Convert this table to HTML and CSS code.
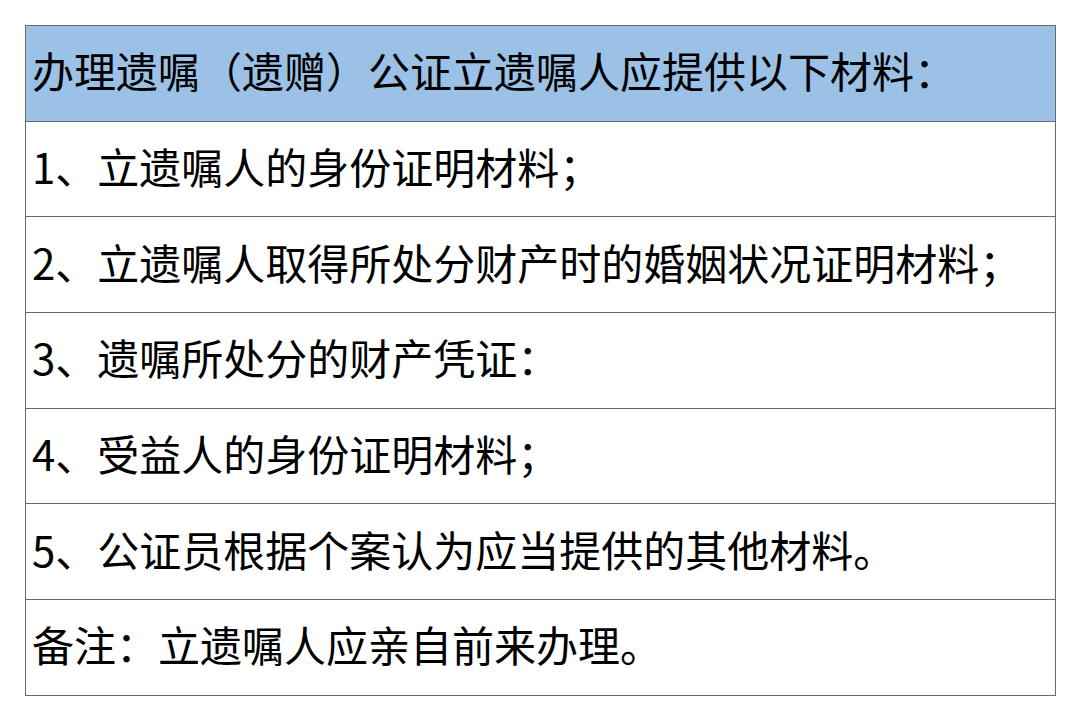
FILE: index.html
```html
<!DOCTYPE html>
<html lang="zh-CN">
<head>
<meta charset="utf-8">
<link rel="stylesheet" href="styles.css">
</head>
<body>
<table class="sheet">
  <tr class="head"><td>办理遗嘱（遗赠）公证立遗嘱人应提供以下材料：</td></tr>
  <tr><td>1、立遗嘱人的身份证明材料；</td></tr>
  <tr><td>2、立遗嘱人取得所处分财产时的婚姻状况证明材料；</td></tr>
  <tr><td>3、遗嘱所处分的财产凭证：</td></tr>
  <tr><td>4、受益人的身份证明材料；</td></tr>
  <tr><td>5、公证员根据个案认为应当提供的其他材料。</td></tr>
  <tr><td>备注：立遗嘱人应亲自前来办理。</td></tr>
</table>
</body>
</html>
```
FILE: styles.css
```css
html, body {
  margin: 0;
  padding: 0;
  background: #ffffff;
}
body {
  padding: 25px 0 0 25px;
}
.sheet {
  border-collapse: collapse;
  width: 1031px;
  font-family: "Noto Sans CJK SC", "Noto Sans", sans-serif;
  font-size: 42px;
  color: #000;
}
.sheet td {
  border: 1.5px solid #6a6a6a;
  height: 95.7px;
  box-sizing: border-box;
  padding: 0 0 6px 6px;
  vertical-align: middle;
  white-space: nowrap;
  line-height: 1;
}
.sheet .head td {
  background: #9bc2e6;
}
```
